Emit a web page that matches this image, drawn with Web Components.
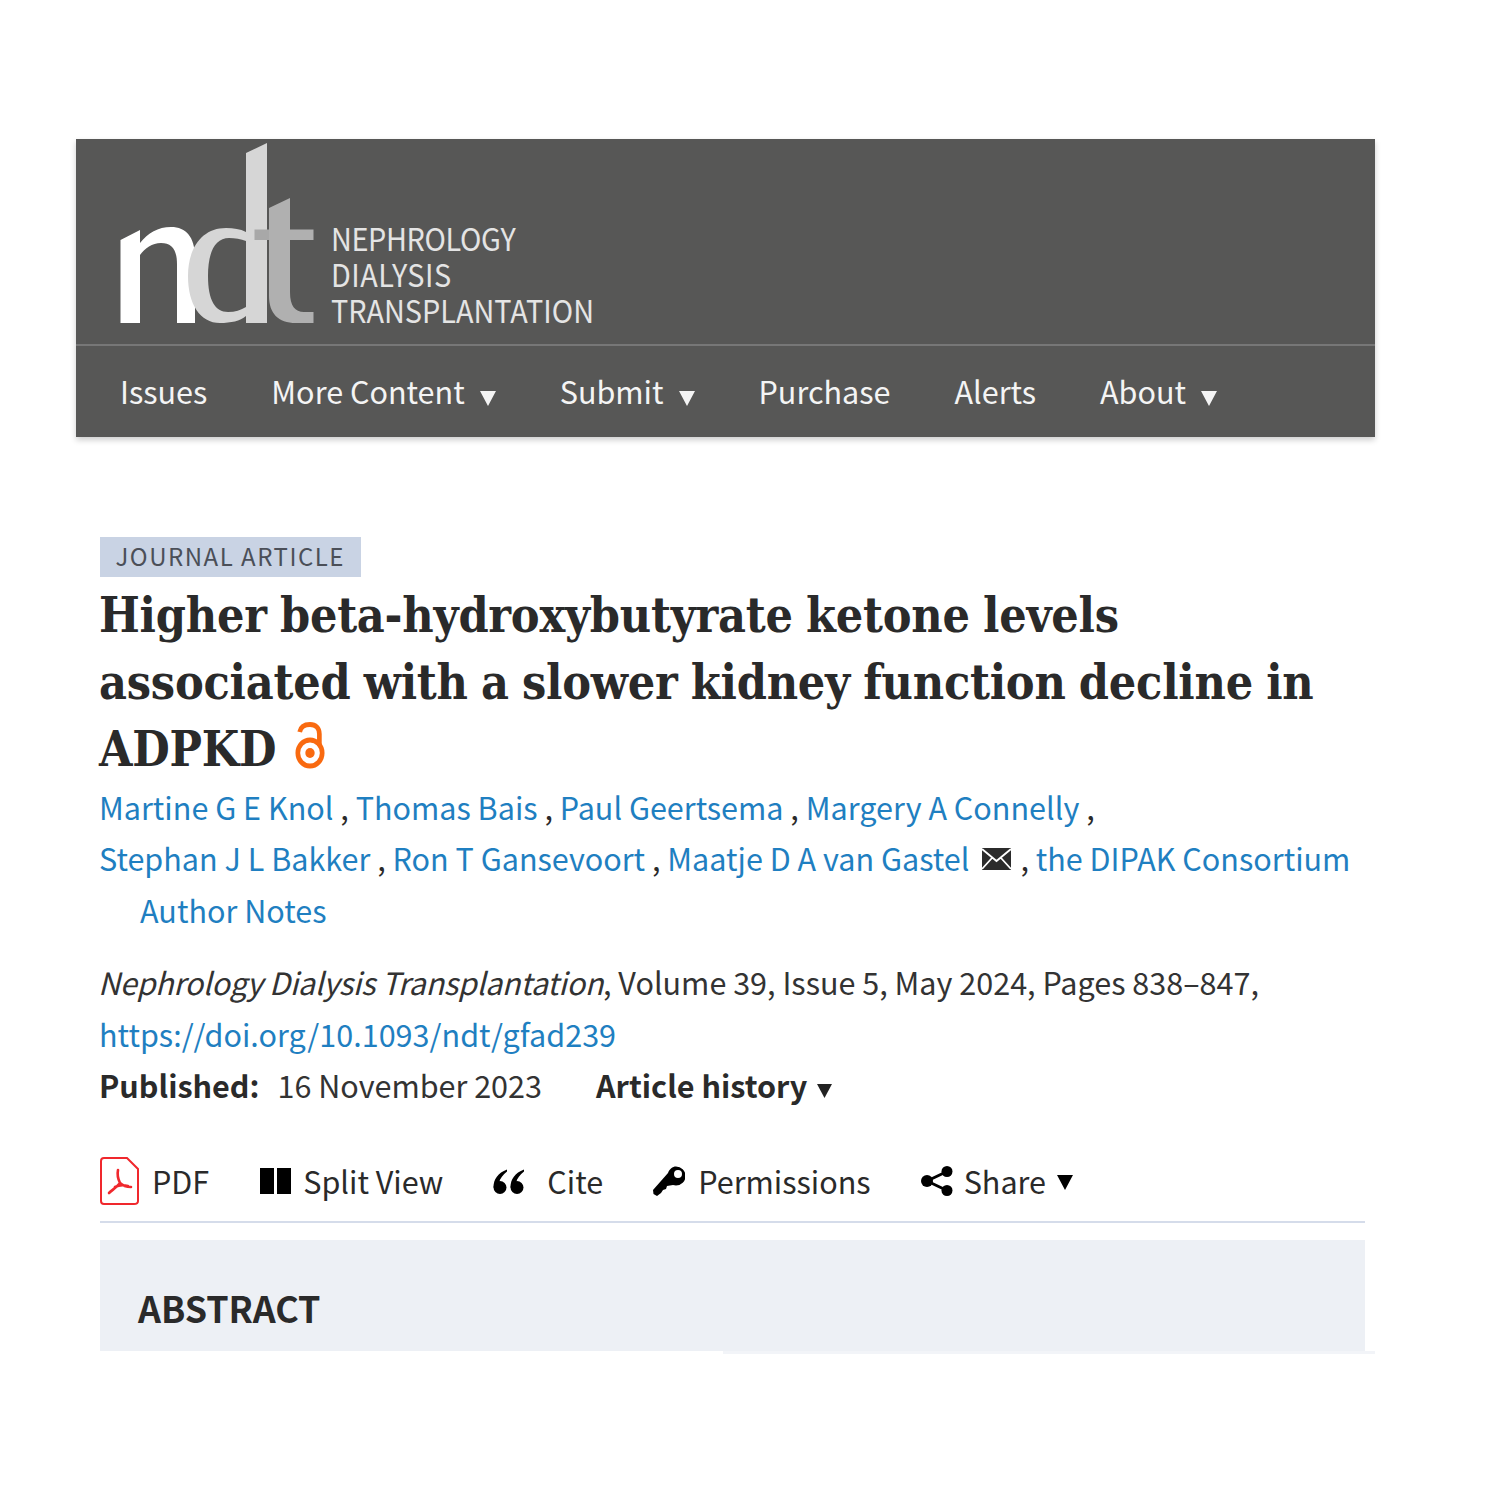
<!DOCTYPE html>
<html lang="en"><head><meta charset="utf-8"><title>NDT article</title>
<style>
html,body{margin:0;background:#fff}
body{padding-top:139px;font-family:"Noto Sans CJK SC","Open Sans",sans-serif;color:#2a2a2a;width:1500px;height:1361px;overflow:hidden}
</style></head><body>
<site-header>
  <nav-item>Issues</nav-item>
  <nav-item caret>More Content</nav-item>
  <nav-item caret>Submit</nav-item>
  <nav-item>Purchase</nav-item>
  <nav-item>Alerts</nav-item>
  <nav-item caret>About</nav-item>
</site-header>
<article-head>
  <article-tag>JOURNAL ARTICLE</article-tag>
  <article-title>Higher beta-hydroxybutyrate ketone levels associated with a slower kidney function decline in ADPKD</article-title>
  <author-list></author-list>
  <article-cite></article-cite>
  <tool-bar></tool-bar>
  <abstract-box>ABSTRACT</abstract-box>
</article-head>
<script>
function def(name, css, html, init){
  customElements.define(name, class extends HTMLElement{
    constructor(){super();const r=this.attachShadow({mode:'open'});r.innerHTML='<style>'+css+'</style>'+html;if(init)init(this,r);}
  });
}
def('site-header',`
:host{display:block;margin-left:76px;width:1299px;background:#575756;box-shadow:0 3px 6px rgba(0,0,0,.2)}
.brand{height:207px;box-sizing:border-box;display:flex;align-items:flex-end;border-bottom:2px solid #777;padding:0 0 20px 44px;gap:17px}
svg{display:block;flex:none}
.names{display:flex;flex-direction:column;font-size:31.500px;line-height:36px;color:#e4e4e4;margin-bottom:-3px;transform:scaleX(.915);transform-origin:left bottom}
.n1{letter-spacing:-.4px}.n2{letter-spacing:.55px}
nav{display:flex;gap:64px;height:91px;align-items:center;padding-left:44px;box-sizing:border-box;padding-bottom:1px}
`,`<div class="brand">
<svg width="194" height="182" viewBox="120 142 194 182" role="img" aria-label="ndt logo">
<path fill="#fff" d="M120.500 240L140 230V243C148 233 158 227 171 227C187 227 195 238 195 258V323H177V264C177 250 172 243 161 243C152 243 145 248 140 255V323H120.500Z"/>
<path fill="#d6d6d6" fill-rule="evenodd" d="M246 153L267 143V323H246V316C240 321 231 323 220 323C200 323 188 304 188 276C188 248 202 228 226 228C234 228 240 229 246 232ZM246 241C241 239 235 238 229 238C215 238 208 252 208 276C208 300 215 312 228 312C235 312 241 310 246 307Z"/>
<path fill="#b0b0b0" d="M269 208L290 198V229.500H313.500V240H290V292C290 306 295 312 304 312H313.500V323H296C278 323 269 313 269 296Z"/>
<rect x="254.500" y="229.500" width="14.500" height="10.500" fill="#a8a8a8"/>
</svg>
<div class="names"><span class="n1">NEPHROLOGY</span><span class="n2">DIALYSIS</span><span>TRANSPLANTATION</span></div>
</div><nav><slot></slot></nav>`);
def('nav-item',`
:host{display:flex;align-items:center;gap:15px;font-size:30.550px;line-height:40px;color:#f4f4f4;white-space:nowrap}
svg{display:none;margin-top:14px}
:host([caret]) svg{display:block}
`,`<slot></slot><svg width="16" height="15" viewBox="0 0 16 15"><path fill="#f4f4f4" d="M0 0H16L8 15Z"/></svg>`);
def('article-head',`:host{display:block;padding:100px 0 0 100px;width:1265px}`,`<slot></slot>`);
def('article-tag',`
:host{display:flex;align-items:center;width:261px;height:40px;box-sizing:border-box;padding:0 0 3px 15.500px;background:#c9d3e4;color:#4b4f58;font-size:24px;letter-spacing:1.500px;white-space:nowrap}
`,`<slot></slot>`);
def('article-title',`
:host{display:block;width:1240px;margin:5px 0 0 -1px;font-family:"DejaVu Serif","Liberation Serif",serif;font-weight:700;font-stretch:condensed;font-size:48px;letter-spacing:-.225px;word-spacing:-1.550px;line-height:67px;color:#2a2a2a}
svg{display:inline-block;vertical-align:-3px;margin-left:19px}
`,`<slot></slot><svg width="30" height="47" viewBox="0 0 32 47" preserveAspectRatio="none" role="img" aria-label="Open access"><g fill="none" stroke="#f96a10" stroke-width="5"><circle cx="16" cy="31" r="13"/><path d="M5 10C6 5 10 2.500 16 2.500C22 2.500 26 6 26 12V24"/></g><circle cx="16" cy="31" r="5" fill="#f96a10"/></svg>`);
def('author-list',`
:host{display:block;margin:-1px 0 0 -1px;font-size:30.550px;line-height:51px;color:#2a2a2a}
a{color:#1f7fc1;text-decoration:none}
.line{display:flex;align-items:center;white-space:pre}
svg{margin:0 9px 0 13px;flex:none}
.notes{padding-left:41px;line-height:53px}
`,`<div class="line"><a>Martine G E Knol</a> , <a>Thomas Bais</a> , <a>Paul Geertsema</a> , <a>Margery A Connelly</a> ,</div>
<div class="line"><a>Stephan J L Bakker</a> , <a>Ron T Gansevoort</a> , <a>Maatje D A van Gastel</a><svg width="29" height="22" viewBox="0 0 29 22" role="img" aria-label="Email"><rect width="29" height="22" fill="#2b2b2b"/><path d="M0 1L14.500 13L29 1M0 21L10 10M29 21L19 10" stroke="#fff" stroke-width="1.800" fill="none"/></svg>, <a>the DIPAK Consortium</a></div>
<div class="line notes"><a>Author Notes</a></div>`);
def('article-cite',`
:host{display:block;margin:20px 0 0 -1px;font-size:30.550px;line-height:51px;color:#333;white-space:nowrap}
a{color:#1f7fc1}
i{font-style:italic;letter-spacing:-.29px;margin-left:-1px}
b{font-weight:700;color:#2a2a2a}
.hist{margin-left:54px}
.pub{margin-right:18px}
svg{margin-left:10px}
.doi{margin-top:1px}
`,`<div><i>Nephrology Dialysis Transplantation</i>, Volume 39, Issue 5, May 2024, Pages 838–847,</div>
<div class="doi"><a>https://doi.org/10.1093/ndt/gfad239</a></div>
<div><b class="pub">Published:</b>16 November 2023<b class="hist">Article history</b><svg width="15" height="14" viewBox="0 0 15 14"><path fill="#222" d="M0 0H15L7.500 14Z"/></svg></div>`);
def('tool-bar',`
:host{display:flex;align-items:center;gap:50px;height:112px;box-sizing:border-box;padding-top:30px;border-bottom:2px solid #d5dcea;font-size:30.550px;color:#2a2a2a;white-space:nowrap}
.t{display:flex;align-items:center;gap:13px}
svg{display:block;flex:none}
`,`<div class="t"><svg width="39" height="48" viewBox="0 0 39 48" role="img" aria-label="PDF"><path fill="#fff" stroke="#f0282d" stroke-width="2" d="M4 1H27L38 12V44C38 46 36 47 34 47H4C2 47 1 46 1 44V4C1 2 2 1 4 1Z"/><path fill="none" stroke="#f0282d" stroke-width="2.600" stroke-linecap="round" d="M18 13C17 18 18 22 20 26C16 31 12 33 9 36M20 26C22 28 26 30 31 30M15 30C19 28 24 28 28 29"/></svg>PDF</div>
<div class="t" style="gap:12px"><svg style="margin-left:1px" width="31" height="26" viewBox="0 0 31 26" role="img" aria-label="Split view"><path d="M0 0H14V26H0ZM17 0H31V26H17Z"/></svg>Split View</div>
<div class="t" style="gap:23px"><svg width="31" height="25" viewBox="0 0 31 25" role="img" aria-label="Cite"><circle cx="7" cy="18.500" r="6.500"/><circle cx="24" cy="18.500" r="6.500"/><path d="M14 .5C5 4 .5 10 .5 18.500L6 14C7 9 10 6 14 2.500ZM31 .5C22 4 17.500 10 17.500 18.500L23 14C24 9 27 6 31 2.500Z"/></svg>Cite</div>
<div class="t"><svg width="32" height="30" viewBox="0 0 32 30" role="img" aria-label="Permissions"><path fill-rule="evenodd" d="M23 .5A9.500 9.500 0 1 1 23 19.500C22 19.500 21 19.300 20 19L14 20L13 23L10 24L8 27L4 30L.5 28L0 24L15 7C16.500 3 19.500 .5 23 .5ZM25 4A4 4 0 1 0 25 12A4 4 0 1 0 25 4Z"/></svg>Permissions</div>
<div class="t" style="gap:11px"><svg width="32" height="30" viewBox="0 0 32 30" role="img" aria-label="Share"><circle cx="6" cy="15" r="6"/><circle cx="26" cy="5.500" r="5.500"/><circle cx="26" cy="24.500" r="5.500"/><path d="M6 15L26 5.500M6 15L26 24.500" stroke="#000" stroke-width="3"/></svg>Share<svg style="margin-top:3px" width="16" height="15" viewBox="0 0 16 15"><path d="M0 0H16L8 15Z"/></svg></div>`);
def('abstract-box',`
:host{display:block;margin-top:17px}
.box{height:111px;box-sizing:border-box;background:#edf0f5;padding:43px 0 0 38px;font-size:35.800px;line-height:48px;font-weight:700;color:#2a2a2a}
.edge{height:3px;width:652px;margin-left:623px;background:#f2f4f8}
`,`<div class="box"><slot></slot></div><div class="edge"></div>`);
</script>
</body></html>
